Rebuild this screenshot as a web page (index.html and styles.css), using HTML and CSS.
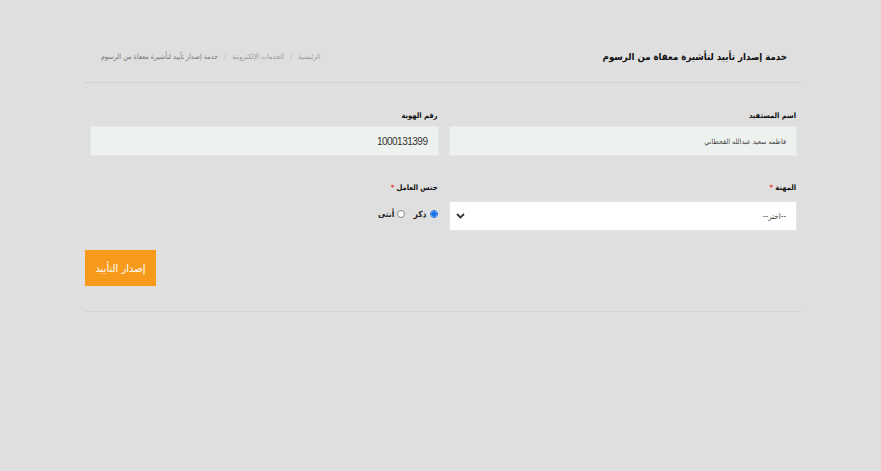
FILE: index.html
```html
<!DOCTYPE html>
<html lang="ar" dir="rtl">
<head>
<meta charset="utf-8">
<link rel="stylesheet" href="styles.css">
</head>
<body>
<div class="page">
  <div class="header">
    <h1 class="title">خدمة إصدار تأييد لتأشيرة معفاة من الرسوم</h1>
    <div class="crumbs">
      <span>الرئيسية</span><span class="sep">/</span><span>الخدمات الإلكترونية</span><span class="sep">/</span><span class="cur">خدمة إصدار تأييد لتأشيرة معفاة من الرسوم</span>
    </div>
  </div>
  <div class="form">
    <div class="row">
      <div class="col">
        <label class="lbl">اسم المستفيد</label>
        <div class="field ro">فاطمه سعيد عبدالله القحطاني</div>
      </div>
      <div class="col">
        <label class="lbl">رقم الهوية</label>
        <div class="field ro num">1000131399</div>
      </div>
    </div>
    <div class="row row2">
      <div class="col">
        <label class="lbl">المهنة <span class="req">*</span></label>
        <div class="field sel"><span>--اختر--</span>
          <svg class="chev" width="9" height="6" viewBox="0 0 9 6"><path d="M1 1l3.5 3.5L8 1" fill="none" stroke="#333" stroke-width="1.8"/></svg>
        </div>
      </div>
      <div class="col">
        <label class="lbl">جنس العامل <span class="req">*</span></label>
        <div class="radios">
          <span class="radio on"></span><span class="rtxt">ذكر</span>
          <span class="radio"></span><span class="rtxt">أنثى</span>
        </div>
      </div>
    </div>
    <div class="actions">
      <button class="btn">إصدار التأييد</button>
    </div>
  </div>
</div>
</body>
</html>
```
FILE: styles.css
```css
html, body { margin: 0; padding: 0; }
body {
  background: #dfdfdf;
  font-family: "DejaVu Sans Condensed", "DejaVu Sans", sans-serif;
  color: #222;
}
.page {
  width: 717px;
  margin-right: 79px;
}
.header {
  display: flex;
  justify-content: space-between;
  align-items: center;
  height: 83px;
  box-sizing: border-box;
  padding: 30px 15px 0 16px;
  border-bottom: 1px solid #cdd1d4;
}
.title {
  margin: 0;
  font-size: 9.6px;
  font-weight: bold;
  color: #111;
}
.crumbs {
  font-size: 7.2px;
  color: #9a9a9a;
  display: flex;
}
.crumbs .sep { margin: 0 6px; color: #bbb; }
.crumbs .cur { color: #777; }
.form {
  padding-top: 26px;
  border-bottom: 1px solid #d3d3d3;
  padding-bottom: 25px;
}
.row {
  display: flex;
}
.row2 { margin-top: 25px; }
.col {
  width: 50%;
  box-sizing: border-box;
  padding: 0 5px;
}
.lbl {
  display: block;
  font-size: 7.5px;
  font-weight: bold;
  color: #111;
  padding-right: 1px;
  height: 17px;
  line-height: 13px;
}
.req { color: #e33; }
.field {
  height: 30px;
  box-sizing: border-box;
  padding: 0 10px;
  display: flex;
  align-items: center;
  font-size: 7.2px;
  color: #444;
}
.ro {
  background: #eef2ef;
  border: 1px solid #e6e8e6;
}
.num {
  font-family: "Liberation Sans", Arial, sans-serif;
  font-size: 10px;
  letter-spacing: -0.5px;
  color: #333;
}
.sel {
  background: #fff;
  border: 1px solid #e4e4e4;
  justify-content: space-between;
  height: 30px;
  margin-top: 3px;
  font-size: 8px;
}
.chev { display: block; margin-left: -4px; }
.radios {
  display: flex;
  align-items: center;
  height: 27px;
  margin-top: 2px;
  font-size: 8.5px;
  color: #222;
  padding-right: 1px;
}
.radio {
  width: 8px;
  height: 8px;
  border-radius: 50%;
  border: 1px solid #888;
  background: #fff;
  box-sizing: border-box;
  display: inline-block;
}
.radio.on {
  border: 1px solid #1a73e8;
  background: radial-gradient(circle, #1a73e8 0 2.5px, #fff 3px);
}
.rtxt { margin: 0 3px 0 8px; font-weight: bold; }
.actions {
  margin-top: 19px;
  display: flex;
  justify-content: flex-end;
}
.btn {
  width: 71px;
  height: 36px;
  border: none;
  background: #f79a1c;
  color: #fff;
  font-family: "DejaVu Sans", sans-serif;
  font-size: 10px;
  padding: 0;
}
```
